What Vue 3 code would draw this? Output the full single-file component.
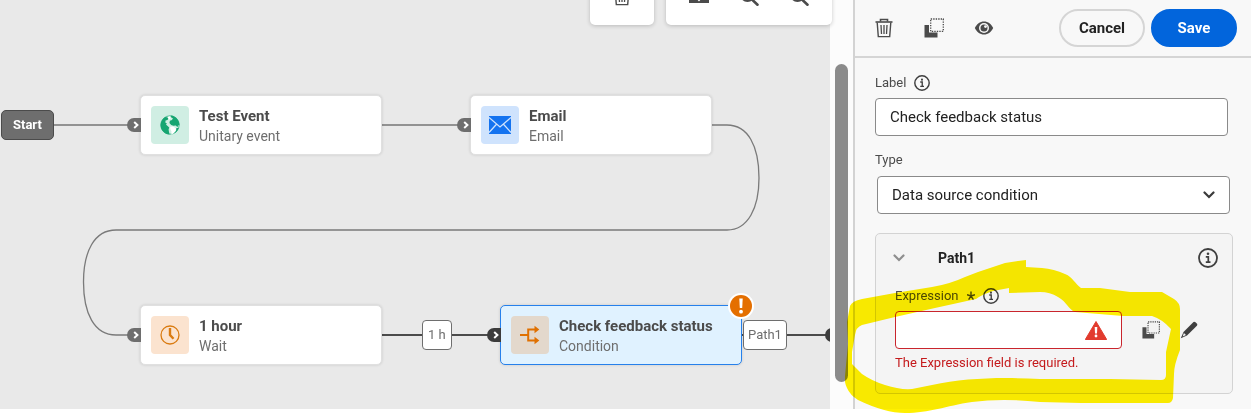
<template>
  <div class="page">
    <main class="canvas">
      <div class="viewport">
        <svg class="edges" width="900" height="409" fill="none">
          <path class="edge" d="M54 125H140" />
          <path class="edge" d="M382 125H470" />
          <path class="edge thin" d="M712 125H727C748 125 759 146 759 178C759 208 748 230 727 230H116C94 230 83.500 252 83.500 282C83.500 313 94 335 116 335H135" />
          <path class="edge dark" d="M382 335H500" />
          <path class="edge dark" d="M740 335H832" />
        </svg>

        <span class="start">Start</span>

        <div
          v-for="node in nodes"
          :key="node.title"
          class="node"
          :class="[node.kind, { selected: node.selected }]"
          :style="{ left: node.x + 'px', top: node.y + 'px' }"
        >
          <span class="port">
            <svg width="6" height="8" viewBox="0 0 6 8"><path d="M1.2 1 4.4 4 1.2 7" fill="none" stroke="#fff" stroke-width="2" /></svg>
          </span>
          <span class="node-icon">
            <svg v-if="node.kind === 'event'" width="20" height="20" viewBox="0 0 20 20">
              <circle cx="10" cy="10" r="9.200" fill="none" stroke="#16a571" stroke-width=".7" />
              <path d="M5.200 1.900 7.200 2.200 8.600 3.600 7.400 5 5.600 5.600 5.300 7.400 6.900 8.600 6 9.600 7.600 11 9.200 12.400 8.600 14.400 8.900 16.400 9.600 19.500C4.400 19.300 .6 15.200 .6 10 .6 6.600 2.400 3.600 5.200 1.900Z" fill="#16a571" />
              <path d="M10.800 .6C13.600 .8 16 2.200 17.600 4.400 18.800 6 19.400 7.900 19.400 9.900L18 10.500 17.500 12.300 15.800 10.400 13.400 10.800 11.200 10 9.400 8 9.900 5.800 12 4.900 12.900 3.300 11.200 2.600Z" fill="#16a571" />
              <path d="M10.200 11.700 13 11.500 16 13.400 15.600 15.800 13.300 18.600 11.300 19.400 11.500 16.500 10.300 14Z" fill="#fff" />
              <path d="M16.400 13 18.700 12.900C17.900 15.300 16.300 17.400 14.200 18.500L16.100 15.800Z" fill="#16a571" />
              <path d="M7.600 2 9.800 1.300 10.500 3.300 9 4.700Z" fill="#fff" />
            </svg>
            <svg v-else-if="node.kind === 'email'" width="22" height="18" viewBox="0 0 22 18">
              <path d="M0 0H22V18H0Z" fill="#1473f0" />
              <path d="M0 1.500 11 11 22 1.500M0 16.500 7.500 8.200M22 16.500 14.500 8.200" fill="none" stroke="#cfe3fd" stroke-width="1.300" />
            </svg>
            <svg v-else-if="node.kind === 'wait'" width="20" height="20" viewBox="0 0 20 20" fill="none" stroke="#da7b11">
              <circle cx="10" cy="10" r="9" stroke-width="1.300" />
              <path d="M10 3V10L13.500 13.800" stroke-width="2.400" />
            </svg>
            <svg v-else width="20" height="20" viewBox="0 0 20 20">
              <path d="M0 10H7.500M16 4.500H8.200V15.500H16" fill="none" stroke="#e07000" stroke-width="2" />
              <path d="M14.500 .8 19.300 4.500 14.500 8.200ZM14.500 11.800 19.300 15.500 14.500 19.200Z" fill="#e07000" />
            </svg>
          </span>
          <span class="node-text">
            <strong>{{ node.title }}</strong>
            <span>{{ node.subtitle }}</span>
          </span>
          <span v-if="node.selected" class="alert">
            <svg width="22" height="22" viewBox="0 0 22 22">
              <circle cx="11" cy="11" r="11" fill="#e46f00" />
              <path d="M9.300 3.500H12.700L12.200 13H9.800Z" fill="#fff" />
              <circle cx="11" cy="16.700" r="1.900" fill="#fff" />
            </svg>
          </span>
        </div>

        <span class="tag wait-tag">1 h</span>
        <span class="tag path-tag">Path1</span>
        <span class="end-port"></span>
      </div>

      <div class="toolbars">
        <div class="toolbar single">
          <button type="button" aria-label="Delete"><IconTrash /></button>
        </div>
        <div class="toolbar">
          <button type="button" aria-label="Download">
            <svg width="20" height="20" viewBox="0 0 20 20"><path d="M0 8H6V11L10 15.500 14 11V8H20V17H0Z" fill="#4b4b4b" /></svg>
          </button>
          <button v-for="zoom in ['Zoom in', 'Zoom out']" :key="zoom" type="button" :aria-label="zoom">
            <svg width="20" height="20" viewBox="0 0 20 20" fill="none" stroke="#4b4b4b">
              <circle cx="8.500" cy="8.500" r="6.500" stroke-width="2" />
              <path d="M5.500 8.500H11.500" stroke-width="2" />
              <path v-if="zoom === 'Zoom in'" d="M8.500 5.500V11.500" stroke-width="2" />
              <path d="M13 13.500 18.500 18.700" stroke-width="2.600" stroke-linecap="round" />
            </svg>
          </button>
        </div>
      </div>
    </main>

    <div class="scroll-track"><div class="scroll-thumb"></div></div>

    <aside class="panel">
      <header class="panel-header">
        <button type="button" class="icon-button" aria-label="Delete"><IconTrash /></button>
        <button type="button" class="icon-button" aria-label="Copy"><IconCopy :size="20" /></button>
        <button type="button" class="icon-button" aria-label="Preview">
          <svg width="20" height="20" viewBox="0 0 20 20">
            <path d="M.8 10C2.500 6.200 6 3.500 10 3.500S17.500 6.200 19.200 10C17.500 13.800 14 16.500 10 16.500S2.500 13.800 .8 10Z" fill="#4b4b4b" />
            <circle cx="10" cy="10" r="5" fill="#f8f8f8" />
            <circle cx="10" cy="10" r="3.500" fill="#4b4b4b" />
            <circle cx="11.500" cy="8.600" r="1.400" fill="#f8f8f8" />
          </svg>
        </button>
        <span class="spacer"></span>
        <button type="button" class="pill">Cancel</button>
        <button type="button" class="pill primary">Save</button>
      </header>

      <form class="panel-body" @submit.prevent>
        <div class="label-row">
          <label for="activity-label">Label</label>
          <IconInfo :size="16" />
        </div>
        <input id="activity-label" v-model="label" class="control" type="text" />

        <div class="label-row">
          <label for="activity-type">Type</label>
        </div>
        <div class="select-wrap">
          <select id="activity-type" v-model="type" class="control">
            <option>Data source condition</option>
          </select>
          <IconChevron class="select-arrow" color="#3a3a3a" />
        </div>

        <section class="path">
          <div class="path-header">
            <button type="button" class="icon-button" aria-label="Collapse"><IconChevron color="#8e8e8e" /></button>
            <h3>Path1</h3>
            <span class="spacer"></span>
            <IconInfo :size="20" />
          </div>
          <div class="label-row">
            <label for="expression">Expression</label>
            <svg width="8" height="10" viewBox="0 0 9 10"><path d="M4.500 0V5M0 3.500 4.500 5 9 3.500M1.800 9 4.500 5 7.200 9" fill="none" stroke="#4b4b4b" stroke-width="1.600" /></svg>
            <IconInfo :size="16" />
          </div>
          <div class="expression-row">
            <div class="expression-field">
              <input id="expression" v-model="expression" class="control invalid" type="text" required />
              <svg class="warning" width="22" height="19" viewBox="0 0 22 19">
                <path d="M11 .5 21.700 18.500H.3Z" fill="#e23b2e" stroke="#e23b2e" stroke-linejoin="round" />
                <path d="M9.700 6H12.300L12 12.500H10Z" fill="#fff" />
                <circle cx="11" cy="15" r="1.400" fill="#fff" />
              </svg>
            </div>
            <button type="button" class="icon-button" aria-label="Copy expression"><IconCopy :size="18" /></button>
            <button type="button" class="icon-button" aria-label="Edit expression">
              <svg width="18" height="18" viewBox="0 0 18 18">
                <path d="M13.500 1Q14.500 .3 15.500 1.300L17 2.800Q17.800 3.700 16.900 4.700L7 14.500 .8 17.200 3.500 11Z" fill="#3f3f3f" />
                <path d="M3.900 12 6 14.100 2.700 15.500Z" fill="#f4f4f4" />
              </svg>
            </button>
          </div>
          <p class="error">The Expression field is required.</p>
        </section>
      </form>

      <svg class="marker" width="336" height="155" viewBox="845 259 336 155">
        <path
          fill="#fff000"
          fill-rule="evenodd"
          d="M1018 261 1026 260V267L1042 268Q1054 269 1065 274C1073 277 1075 284 1081 288H1100L1130 292 1162 292 1174 299Q1180 303 1180 309V350Q1174 365 1174 374L1173 398Q1172 403 1168 403H1081L1040 402Q1002 398 972 402C945 406 930 413 905 413Q885 413 858 400 850 395 847 388 844 382 845 376L848 344 847 322 850 306Q852 301 862 299L895 293 932 287Q950 284 965 277L978 272 1005 263ZM1009 288V293L1040 292Q1050 292 1058 297C1067 302 1068 309 1075 312L1123 316H1152Q1162 319 1171 329L1166 352V375Q1166 380 1161 380L1110 379H1040C1000 377 965 378 932 385L912 389Q900 390 885 385 872 381 862 374L852 364V352L855 335Q856 327 862 325L895 317 935 308 976 299Q983 294 993 291Z"
        />
      </svg>
    </aside>
  </div>
</template>

<script setup>
import { h, ref } from 'vue'

const label = ref('Check feedback status')
const type = ref('Data source condition')
const expression = ref('')

const nodes = [
  { kind: 'event', title: 'Test Event', subtitle: 'Unitary event', x: 140, y: 95 },
  { kind: 'email', title: 'Email', subtitle: 'Email', x: 470, y: 95 },
  { kind: 'wait', title: '1 hour', subtitle: 'Wait', x: 140, y: 305 },
  { kind: 'condition', title: 'Check feedback status', subtitle: 'Condition', x: 500, y: 305, selected: true }
]

// small icons that are used more than once
const IconTrash = () =>
  h('svg', { width: 20, height: 20, viewBox: '0 0 20 20', fill: 'none', stroke: '#4b4b4b' }, [
    h('path', { d: 'M1.500 4H18.500', 'stroke-width': 1.6 }),
    h('path', { d: 'M6.500 3.500V1.500H13.500V3.500', 'stroke-width': 1.6 }),
    h('path', { d: 'M3.200 4.500 4.300 18.600H15.700L16.800 4.500', 'stroke-width': 1.4 }),
    h('path', { d: 'M7 7 7.500 16M10 7V16M13 7 12.500 16', 'stroke-width': 1.3 })
  ])

const IconCopy = (props) =>
  h('svg', { width: props.size, height: props.size, viewBox: '0 0 20 20' }, [
    h('path', { d: 'M.5 7H5V14.500H13.500V19.500H.5Z', fill: '#4b4b4b' }),
    h('path', { d: 'M6.700 1H19.300V13.300H6.700Z', fill: 'none', stroke: '#4b4b4b', 'stroke-width': 1.3, 'stroke-dasharray': '1.4 1.1' })
  ])
IconCopy.props = ['size']

const IconInfo = (props) =>
  h('svg', { width: props.size, height: props.size, viewBox: '0 0 20 20' }, [
    h('circle', { cx: 10, cy: 10, r: 9, fill: 'none', stroke: '#3f3f3f', 'stroke-width': 1.8 }),
    h('circle', { cx: 10, cy: 5.8, r: 1.3, fill: '#3f3f3f' }),
    h('path', { d: 'M7.800 8.800H10.300V14M7.800 14.200H12.500', fill: 'none', stroke: '#3f3f3f', 'stroke-width': 1.7 })
  ])
IconInfo.props = ['size']

const IconChevron = (props) =>
  h('svg', { width: 12, height: 8, viewBox: '0 0 12 8' }, [
    h('path', { d: 'M1.500 1.500 6 6 10.500 1.500', fill: 'none', stroke: props.color, 'stroke-width': 2.2, 'stroke-linecap': 'round' })
  ])
IconChevron.props = ['color']
</script>

<style>
body {
  background: #fff;
}
</style>

<style scoped>
.page {
  display: flex;
  padding-bottom: 6px;
  background: #fff;
  font-family: Roboto, "Liberation Sans", sans-serif;
  font-size: 14px;
  color: #222;
}

button {
  font: inherit;
  cursor: pointer;
}

svg {
  flex: none;
}

/* canvas */
.canvas {
  position: relative;
  flex: 1;
  min-width: 0;
  background: #e9e9e9;
}

.viewport {
  position: absolute;
  inset: 0;
  overflow: hidden;
}

.edges {
  position: absolute;
  top: 0;
  left: 0;
}

.edge {
  stroke: #929292;
  stroke-width: 2;
}

.edge.thin {
  stroke: #7a7a7a;
  stroke-width: 1.3;
}

.edge.dark {
  stroke: #4b4b4b;
}

.start {
  position: absolute;
  top: 110px;
  left: 1px;
  padding: 0 11px;
  border: 1px solid #4b4b4b;
  border-radius: 5px;
  background: #6e6e6e;
  color: #fff;
  font-size: 13px;
  font-weight: bold;
  line-height: 28px;
}

.node {
  position: absolute;
  box-sizing: border-box;
  display: flex;
  align-items: center;
  gap: 10px;
  width: 242px;
  height: 60px;
  padding: 0 10px;
  border: 1px solid #e0e0e0;
  border-radius: 5px;
  background: #fff;
  box-shadow: 0 0 3px rgba(0, 0, 0, 0.15);
}

.node.selected {
  border-color: #2680eb;
  background: #e0f2ff;
}

.port {
  position: absolute;
  top: 22px;
  left: -14px;
  box-sizing: border-box;
  display: flex;
  align-items: center;
  width: 14px;
  height: 14px;
  padding-left: 6px;
  border-radius: 7px 0 0 7px;
  background: #6e6e6e;
}

.selected .port {
  background: #3c3c3c;
}

.node-icon {
  flex: none;
  display: flex;
  align-items: center;
  justify-content: center;
  width: 38px;
  height: 38px;
  border-radius: 4px;
}

.event .node-icon {
  background: #d0eee3;
}

.email .node-icon {
  background: #cfe3fd;
}

.wait .node-icon {
  background: #fbe3cf;
}

.condition .node-icon {
  background: #e3d8cc;
}

.node-text {
  display: flex;
  flex-direction: column;
  padding-top: 2px;
  color: #6e6e6e;
  line-height: 20px;
  white-space: nowrap;
}

.node-text strong {
  color: #4b4b4b;
  font-size: 15px;
}

.alert {
  position: absolute;
  top: -13px;
  right: -13px;
  display: flex;
  padding: 2px;
  border-radius: 50%;
  background: #fff;
}

.tag {
  position: absolute;
  top: 320px;
  box-sizing: border-box;
  border: 1px solid #6e6e6e;
  border-radius: 4px;
  background: #fff;
  color: #6e6e6e;
  font-size: 13px;
  line-height: 28px;
}

.wait-tag {
  left: 422px;
  padding: 0 5px;
}

.path-tag {
  left: 743px;
  padding: 0 4px;
}

.end-port {
  position: absolute;
  top: 328px;
  left: 825px;
  width: 14px;
  height: 14px;
  border-radius: 7px;
  background: #3c3c3c;
}

.toolbars {
  position: absolute;
  top: -33px;
  right: -2px;
  z-index: 1;
  display: flex;
  gap: 12px;
}

.toolbar {
  display: flex;
  align-items: center;
  gap: 14px;
  height: 58px;
  padding: 0 15px;
  border-radius: 5px;
  background: #fff;
  box-shadow: 0 1px 4px rgba(0, 0, 0, 0.2);
}

.toolbar.single {
  padding: 0 14px;
}

.toolbar button {
  display: flex;
  align-items: center;
  justify-content: center;
  width: 36px;
  height: 36px;
  padding: 0;
  border: 0;
  background: none;
}

.scroll-track {
  flex: none;
  box-sizing: border-box;
  width: 23px;
  padding: 64px 5px 27px;
  display: flex;
  background: #fcfcfc;
}

.scroll-thumb {
  width: 13px;
  border-radius: 7px;
  background: #8b8b8b;
}

/* side panel */
.panel {
  position: relative;
  flex: none;
  box-sizing: border-box;
  width: 398px;
  border-left: 2px solid #d3d3d3;
  background: #f8f8f8;
}

.panel-header {
  display: flex;
  align-items: center;
  height: 56px;
  padding: 0 14px 0 19px;
  border-bottom: 2px solid #d5d5d5;
}

.icon-button {
  display: flex;
  align-items: center;
  justify-content: center;
  padding: 0;
  border: 0;
  background: none;
}

.panel-header .icon-button {
  margin-right: 30px;
}

.spacer {
  flex: 1;
}

.pill {
  box-sizing: border-box;
  width: 86px;
  height: 38px;
  padding: 0;
  border: 2px solid #d5d5d5;
  border-radius: 19px;
  background: #f8f8f8;
  color: #222;
  font-size: 15px;
  font-weight: bold;
}

.pill.primary {
  margin-left: 6px;
  border-color: #0265dc;
  background: #0265dc;
  color: #fff;
}

.panel-body {
  display: flex;
  flex-direction: column;
  padding: 15px 18px 15px 20px;
}

.label-row {
  display: flex;
  align-items: center;
  gap: 8px;
  height: 20px;
  color: #4b4b4b;
  font-size: 13px;
}

.label-row label {
  line-height: 20px;
}

.control {
  box-sizing: border-box;
  width: 100%;
  height: 38px;
  margin: 0;
  padding: 0 14px;
  border: 1px solid #8a8a8a;
  border-radius: 4px;
  background: #fff;
  color: #222;
  font: inherit;
  font-size: 15px;
  outline: 0;
}

#activity-label {
  width: auto;
  margin: 5px 5px 14px 0;
}

.select-wrap {
  position: relative;
  margin: 6px 3px 19px 2px;
}

select.control {
  display: block;
  appearance: none;
}

.select-arrow {
  position: absolute;
  top: 15px;
  right: 15px;
  pointer-events: none;
}

.path {
  padding: 10px 14px 20px 19px;
  border: 1px solid #d3d3d3;
  border-radius: 5px;
  background: #f4f4f4;
}

.path-header {
  display: flex;
  align-items: center;
  height: 28px;
  margin-bottom: 14px;
}

.path-header .icon-button {
  width: 8px;
}

.path-header h3 {
  margin: 0 0 0 35px;
  font-size: 14px;
}

.expression-row {
  display: flex;
  align-items: center;
  gap: 20px;
  margin-top: 5px;
  padding-right: 20px;
}

.expression-field {
  position: relative;
  flex: 1;
}

.control.invalid {
  display: block;
  border-color: #c9252d;
}

.warning {
  position: absolute;
  top: 10px;
  right: 15px;
}

.error {
  margin: 4px 0 0;
  color: #c41a1c;
  font-size: 13px;
  line-height: 20px;
}

/* highlighter stroke drawn over the expression field */
.marker {
  position: absolute;
  top: 259px;
  left: -10px;
  mix-blend-mode: multiply;
  pointer-events: none;
}
</style>
